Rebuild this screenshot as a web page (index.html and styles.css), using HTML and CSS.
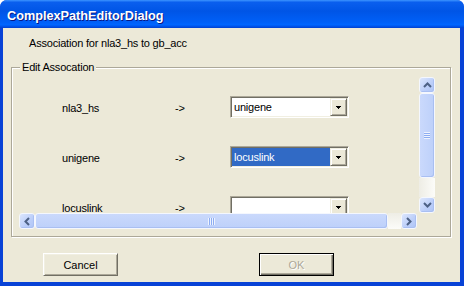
FILE: index.html
```html
<!DOCTYPE html>
<html>
<head>
  <title>ComplexPathEditorDialog</title>
  <link rel="stylesheet" href="styles.css">
</head>
<body>
  <div class="window">
    <div class="titlebar"><span class="title">ComplexPathEditorDialog</span></div>

    <div class="client">
      <p class="caption">Association for nla3_hs to gb_acc</p>

      <div class="group">
        <span class="group-label">Edit Assocation</span>

        <div class="scrollpane">
          <div class="viewport">
            <div class="row">
              <span class="name">nla3_hs</span>
              <span class="arrow">-&gt;</span>
              <div class="combo">
                <span class="combo-text">unigene</span>
                <span class="combo-btn"><svg width="5" height="3"><rect x="0" y="0" width="5" height="1"/><rect x="1" y="1" width="3" height="1"/><rect x="2" y="2" width="1" height="1"/></svg></span>
              </div>
            </div>
            <div class="row">
              <span class="name">unigene</span>
              <span class="arrow">-&gt;</span>
              <div class="combo">
                <span class="combo-text selected">locuslink</span>
                <span class="combo-btn"><svg width="5" height="3"><rect x="0" y="0" width="5" height="1"/><rect x="1" y="1" width="3" height="1"/><rect x="2" y="2" width="1" height="1"/></svg></span>
              </div>
            </div>
            <div class="row">
              <span class="name">locuslink</span>
              <span class="arrow">-&gt;</span>
              <div class="combo">
                <span class="combo-text"></span>
                <span class="combo-btn"><svg width="5" height="3"><rect x="0" y="0" width="5" height="1"/><rect x="1" y="1" width="3" height="1"/><rect x="2" y="2" width="1" height="1"/></svg></span>
              </div>
            </div>
          </div>

          <div class="vscroll">
            <div class="sb-btn"><svg width="9" height="6"><polyline points="1,5 4.5,1.5 8,5"/></svg></div>
            <div class="sb-thumb thumb-v"><span class="grip grip-v"></span></div>
            <div class="sb-track track-v"></div>
            <div class="sb-btn"><svg width="9" height="6"><polyline points="1,1 4.5,4.5 8,1"/></svg></div>
          </div>

          <div class="hscroll">
            <div class="sb-btn"><svg width="6" height="9"><polyline points="5,1 1.5,4.5 5,8"/></svg></div>
            <div class="sb-thumb thumb-h"><span class="grip grip-h"></span></div>
            <div class="sb-track track-h"></div>
            <div class="sb-btn"><svg width="6" height="9"><polyline points="1,1 4.5,4.5 1,8"/></svg></div>
          </div>

          <div class="corner"></div>
        </div>
      </div>

      <div class="buttons">
        <button class="btn">Cancel</button>
        <button class="btn default" disabled>OK</button>
      </div>
    </div>
  </div>
</body>
</html>
```

FILE: styles.css
```css
body {
  margin: 0;
  background-color: #FFF;
  font-family: "Liberation Sans", Arial, sans-serif;
  font-size: 11px;
  letter-spacing: -0.2px;
  color: #000;
}

.window {
  width: 464px;
  height: 286px;
  box-sizing: border-box;
  display: flex;
  flex-direction: column;
  padding: 0 4px 4px 3px;
  background-color: #0842D6;
  border-radius: 7px 7px 0 0;
  overflow: hidden;
}

.titlebar {
  height: 28px;
  box-sizing: border-box;
  margin: 0 -4px 0 -3px;
  padding: 5px 0 0 7px;
  background: linear-gradient(#3D95FF 0%, #0A5FEE 8%, #0055E6 40%, #0060F8 80%, #0066FF 88%, #0058F0 93%, #0040D0 100%);
}

.title {
  color: #FFF;
  font-weight: bold;
  font-size: 12.7px;
  letter-spacing: 0;
  line-height: 22px;
  text-shadow: 1px 1px #0A1883;
}

.client {
  flex: 1;
  background-color: #ECE9D8;
}

.caption {
  margin: 9px 0 0 26px;
  line-height: 13px;
}

/* etched group box */
.group {
  position: relative;
  width: 440px;
  height: 170px;
  box-sizing: border-box;
  margin: 17px 0 0 8px;
  padding: 9px 0 0 7px;
  border: 1px solid #ACA899;
  box-shadow: inset 1px 1px #FFF, 1px 1px #FFF;
}

.group-label {
  position: absolute;
  top: -7px;
  left: 8px;
  padding: 0 2px;
  line-height: 13px;
  background-color: #ECE9D8;
}

.scrollpane {
  display: grid;
  grid-template-columns: 398px 18px;
  grid-template-rows: 136px 16px;
}

.viewport {
  overflow: hidden;
  display: flex;
  flex-direction: column;
  gap: 28px;
  padding-top: 19px;
}

.row {
  display: flex;
  height: 22px;
  flex-shrink: 0;
  padding-left: 43px;
}

.name {
  width: 113px;
  padding-top: 1px;
  line-height: 22px;
}

.arrow {
  width: 55px;
  padding-top: 1px;
  line-height: 22px;
}

.combo {
  width: 119px;
  height: 22px;
  box-sizing: border-box;
  display: flex;
  border: 1px solid;
  border-color: #ACA899 #FFF #FFF #ACA899;
  box-shadow: inset 1px 1px #716F64, inset -1px -1px #F1EFE2;
  padding: 1px;
  background-color: #FFF;
}

.combo-text {
  flex: 1;
  padding-left: 2px;
  line-height: 18px;
}

.combo-text.selected {
  background-color: #316AC5;
  color: #FFF;
}

.combo-btn {
  width: 17px;
  box-sizing: border-box;
  display: flex;
  align-items: center;
  justify-content: center;
  background-color: #ECE9D8;
  border: 1px solid;
  border-color: #F1EFE2 #716F64 #716F64 #F1EFE2;
  box-shadow: inset 1px 1px #FFF, inset -1px -1px #ACA899;
}

/* xp scrollbars */
.vscroll {
  width: 16px;
  justify-self: end;
  display: flex;
  flex-direction: column;
}

.hscroll {
  display: flex;
}

.corner {
  background-color: #ECE9D8;
}

.sb-btn {
  width: 16px;
  height: 16px;
  flex-shrink: 0;
  box-sizing: border-box;
  display: flex;
  align-items: center;
  justify-content: center;
  border: 1px solid #F4F7FE;
  border-radius: 3px;
  background: linear-gradient(135deg, #DCE6FD, #BBCEF9 60%, #AFC5F6);
  box-shadow: inset -1px -1px #A9BFF2;
}

.sb-btn svg polyline {
  fill: none;
  stroke: #4D6185;
  stroke-width: 2;
}

.sb-thumb {
  box-sizing: border-box;
  display: flex;
  align-items: center;
  justify-content: center;
  border: 1px solid #F4F7FE;
  border-radius: 3px;
  box-shadow: inset -1px -1px #A9BFF2;
}

.thumb-v {
  height: 85px;
  background: linear-gradient(to right, #CAD9FC, #BDD0FA);
}

.thumb-h {
  width: 353px;
  background: linear-gradient(#CAD9FC, #BDD0FA);
}

.sb-track {
  flex: 1;
}

.track-v {
  background: linear-gradient(to right, #EEEDE5, #FCFCF9);
}

.track-h {
  background: linear-gradient(#EEEDE5, #FCFCF9);
}

.grip-v {
  width: 6px;
  height: 7px;
  background: repeating-linear-gradient(#EEF3FE 0 1px, #8DADF2 1px 2px);
}

.grip-h {
  width: 7px;
  height: 7px;
  background: repeating-linear-gradient(to right, #EEF3FE 0 1px, #8DADF2 1px 2px);
}

/* dialog buttons */
.buttons {
  display: flex;
  gap: 141px;
  margin: 16px 0 0 40px;
}

.btn {
  width: 75px;
  height: 23px;
  padding: 0;
  font: inherit;
  color: #000;
  background-color: #ECE9D8;
  border: 1px solid;
  border-color: #FFF #716F64 #716F64 #FFF;
  box-shadow: inset 1px 1px #F1EFE2, inset -1px -1px #ACA899;
}

.btn.default {
  border: 1px solid #000;
  box-shadow: inset 1px 1px #FFF, inset -1px -1px #716F64, inset -2px -2px #ACA899;
}

.btn:disabled {
  color: #ACA899;
  text-shadow: 1px 1px #FFF;
}
```
